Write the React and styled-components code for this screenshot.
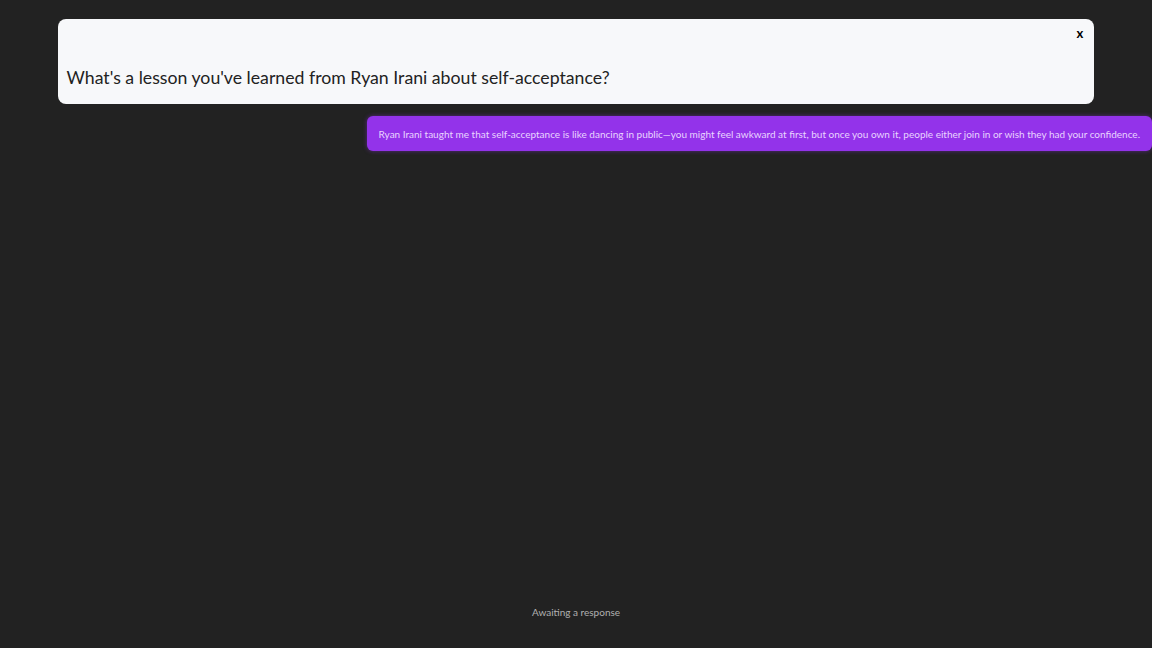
import React from "react";
import styled, { createGlobalStyle } from "styled-components";

const Global = createGlobalStyle`
  html, body { margin: 0; padding: 0; background: #222222; }
  body { font-family: "Lato", "Noto Sans", sans-serif; }
  #root { min-height: 648px; }
`;

const Page = styled.div`
  height: 648px;
  display: flex;
  flex-direction: column;
  padding-top: 19px;
  box-sizing: border-box;
`;

const Card = styled.div`
  position: relative;
  width: 90%;
  margin: 0 auto;
  box-sizing: border-box;
  height: 85px;
  background: #f7f8fa;
  border-radius: 8px;
  display: flex;
  align-items: flex-end;
  padding: 0 9px 16px;
`;

const Question = styled.div`
  font-size: 17.7px;
  color: #222;
`;

const Close = styled.button`
  position: absolute;
  top: 6px;
  right: 11px;
  background: none;
  border: none;
  padding: 0;
  font-family: "Lato", sans-serif;
  font-weight: 700;
  font-size: 13px;
  color: #000;
  cursor: pointer;
`;

const Responses = styled.div`
  display: flex;
  justify-content: flex-end;
  margin-top: 12px;
  flex: 1;
  align-items: flex-start;
`;

const Bubble = styled.div`
  background: #9333ea;
  color: #e9d5ff;
  font-size: 10px;
  border-radius: 6px;
  padding: 11px 12px 11px 12px;
  box-shadow: 0 0 4px rgba(147, 51, 234, 0.5);
  height: 35px;
  box-sizing: border-box;
  display: flex;
  align-items: center;
`;

const Status = styled.div`
  text-align: center;
  font-size: 10px;
  color: #b0b0b0;
  padding-bottom: 30px;
`;

export default function App() {
  return (
    <Page>
      <Global />
      <Card>
        <Close>x</Close>
        <Question>What's a lesson you've learned from Ryan Irani about self-acceptance?</Question>
      </Card>
      <Responses>
        <Bubble>
          Ryan Irani taught me that self-acceptance is like dancing in public—you might feel awkward at first, but once you own it, people either join in or wish they had your confidence.
        </Bubble>
      </Responses>
      <Status>Awaiting a response</Status>
    </Page>
  );
}
